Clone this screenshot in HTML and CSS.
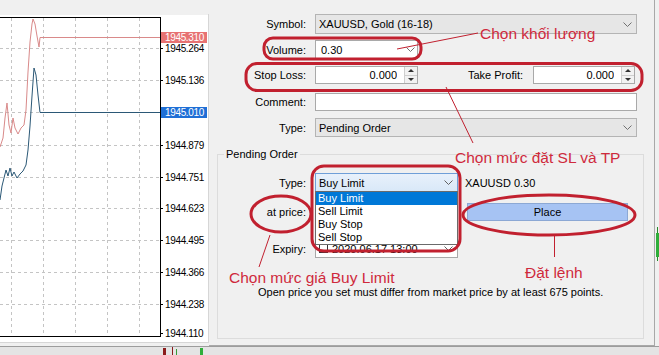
FILE: index.html
```html
<!DOCTYPE html>
<html lang="vi">
<head>
<meta charset="utf-8">
<title>Order</title>
<link rel="stylesheet" href="styles.css">
</head>
<body>
<div class="screen">
  <div class="main">
    <div class="chart-panel">
      <svg class="chart" width="209" height="346" viewBox="0 0 209 346">
        <rect x="0" y="0" width="209" height="346" fill="#f0f0f0"/>
        <rect x="0" y="15" width="208" height="327" fill="#ffffff"/>
        <line x1="208.5" y1="14" x2="208.5" y2="343" stroke="#d6d6d6"/>
        <line x1="0" y1="342.5" x2="209" y2="342.5" stroke="#d6d6d6"/>
        <g stroke="#c4c4c4" stroke-dasharray="3 3" fill="none">
          <line x1="0" y1="48.5" x2="160" y2="48.5"/>
          <line x1="0" y1="80.5" x2="160" y2="80.5"/>
          <line x1="0" y1="112.5" x2="160" y2="112.5"/>
          <line x1="0" y1="145.5" x2="160" y2="145.5"/>
          <line x1="0" y1="177.5" x2="160" y2="177.5"/>
          <line x1="0" y1="208.5" x2="160" y2="208.5"/>
          <line x1="0" y1="240.5" x2="160" y2="240.5"/>
          <line x1="0" y1="272.5" x2="160" y2="272.5"/>
          <line x1="0" y1="304.5" x2="160" y2="304.5"/>
          <line x1="11.5" y1="18" x2="11.5" y2="336"/>
          <line x1="43.5" y1="18" x2="43.5" y2="336"/>
          <line x1="75.5" y1="18" x2="75.5" y2="336"/>
          <line x1="107.5" y1="18" x2="107.5" y2="336"/>
          <line x1="139.5" y1="18" x2="139.5" y2="336"/>
        </g>
        <polyline fill="none" stroke="#d98a8a" stroke-width="1" points="0,147 3,138 5,118 7,103 9,125 11,133 13,118 15,128 18,134 21,128 24,125 26,110 28,72 30,42 32,24 33,19 35,24 37,36 39,47 40,37.5 160,37.5"/>
        <polyline fill="none" stroke="#2b5876" stroke-width="1" points="0,200 2,186 4,178 6,170 8,176 10,168 12,176 14,172 17,178 20,174 23,171 26,165 28,150 30,126 32,96 34,68 36,75 38,95 40,112.5 160,112.5"/>
        <g stroke="#000" fill="none">
          <line x1="0" y1="17.5" x2="161" y2="17.5"/>
          <line x1="160.5" y1="17" x2="160.5" y2="337"/>
          <line x1="0" y1="336.5" x2="161" y2="336.5"/>
          <line x1="160" y1="48.5" x2="163" y2="48.5"/>
          <line x1="160" y1="80.5" x2="163" y2="80.5"/>
          <line x1="160" y1="145.5" x2="163" y2="145.5"/>
          <line x1="160" y1="177.5" x2="163" y2="177.5"/>
          <line x1="160" y1="208.5" x2="163" y2="208.5"/>
          <line x1="160" y1="240.5" x2="163" y2="240.5"/>
          <line x1="160" y1="272.5" x2="163" y2="272.5"/>
          <line x1="160" y1="304.5" x2="163" y2="304.5"/>
          <line x1="160" y1="333.5" x2="163" y2="333.5"/>
        </g>
        <rect x="161" y="32" width="46" height="11" fill="#e77272"/>
        <rect x="161" y="107" width="46" height="11" fill="#1f6fd6"/>
        <g class="axis" font-family="Liberation Sans, Arial, sans-serif" font-size="10" letter-spacing="-0.35" fill="#000">
          <text x="165" y="41.2" fill="#ffffff">1945.310</text>
          <text x="165" y="52">1945.264</text>
          <text x="165" y="84">1945.136</text>
          <text x="165" y="116" fill="#ffffff">1945.010</text>
          <text x="165" y="149">1944.879</text>
          <text x="165" y="181">1944.751</text>
          <text x="165" y="212">1944.623</text>
          <text x="165" y="244">1944.495</text>
          <text x="165" y="276">1944.366</text>
          <text x="165" y="308">1944.238</text>
          <text x="165" y="337">1944.110</text>
        </g>
      </svg>
    </div>

    <div class="dialog">
      <div class="row h20">
        <span class="lbl">Symbol:</span>
        <div class="ctrl combo-ro w-full">
          <span class="val">XAUUSD, Gold (16-18)</span>
          <svg class="chev" width="9" height="5" viewBox="0 0 9 5"><polyline points="0.5,0.5 4.5,4.5 8.5,0.5" fill="none" stroke="#707070"/></svg>
        </div>
      </div>

      <div class="row h19 mt6">
        <span class="lbl">Volume:</span>
        <div class="ctrl edit w-num vol">
          <span class="val">0.30</span>
          <svg class="chev" width="9" height="5" viewBox="0 0 9 5"><polyline points="0.5,0.5 4.5,4.5 8.5,0.5" fill="none" stroke="#707070"/></svg>
        </div>
      </div>

      <div class="row h18 mt7">
        <span class="lbl">Stop Loss:</span>
        <div class="ctrl edit w-num num">
          <span class="val">0.000</span>
          <span class="spin"><span class="spin-btn up"></span><span class="spin-btn down"></span></span>
        </div>
        <span class="lbl-tp">Take Profit:</span>
        <div class="ctrl edit w-tp num">
          <span class="val">0.000</span>
          <span class="spin"><span class="spin-btn up"></span><span class="spin-btn down"></span></span>
        </div>
      </div>

      <div class="row h18 mt9">
        <span class="lbl">Comment:</span>
        <div class="ctrl edit w-full"></div>
      </div>

      <div class="row h19 mt7">
        <span class="lbl">Type:</span>
        <div class="ctrl combo-ro w-full">
          <span class="val">Pending Order</span>
          <svg class="chev" width="9" height="5" viewBox="0 0 9 5"><polyline points="0.5,0.5 4.5,4.5 8.5,0.5" fill="none" stroke="#707070"/></svg>
        </div>
      </div>

      <div class="group">
        <span class="legend">Pending Order</span>

        <div class="row h19">
          <span class="lbl lbl-g">Type:</span>
          <div class="ctrl combo-focus w-mid">
            <span class="val">Buy Limit</span>
            <svg class="chev" width="9" height="5" viewBox="0 0 9 5"><polyline points="0.5,0.5 4.5,4.5 8.5,0.5" fill="none" stroke="#606060"/></svg>
            <ul class="droplist">
              <li class="sel">Buy Limit</li>
              <li>Sell Limit</li>
              <li>Buy Stop</li>
              <li>Sell Stop</li>
            </ul>
          </div>
          <span class="sym-info">XAUUSD 0.30</span>
        </div>

        <div class="row h18 mt11">
          <span class="lbl lbl-g">at price:</span>
          <div class="ctrl edit w-mid"></div>
          <div class="btn">Place</div>
        </div>

        <div class="row h19 mt18">
          <span class="lbl lbl-g">Expiry:</span>
          <div class="ctrl edit w-mid expiry">
            <span class="check"></span>
            <span class="val">2020.06.17 13:00</span>
            <svg class="chev" width="9" height="5" viewBox="0 0 9 5"><polyline points="0.5,0.5 4.5,4.5 8.5,0.5" fill="none" stroke="#606060"/></svg>
          </div>
        </div>

        <p class="msg">Open price you set must differ from market price by at least 675 points.</p>
      </div>
    </div>

    <div class="edge">
      <svg width="4" height="346" viewBox="0 0 4 346">
        <line x1="2.5" y1="227" x2="2.5" y2="261" stroke="#2a8a2a"/>
        <rect x="1" y="233" width="3" height="24" fill="#2fae3a"/>
      </svg>
    </div>
  </div>

  <div class="statusbar">
    <svg width="659" height="8" viewBox="0 0 659 8">
      <rect x="163" y="1" width="3" height="7" fill="#8c1c1c"/>
      <line x1="172.5" y1="0" x2="172.5" y2="8" stroke="#8c1c1c"/>
      <line x1="176.5" y1="2" x2="176.5" y2="8" stroke="#3a9a3a"/>
      <rect x="200" y="1" width="3" height="7" fill="#2fae3a"/>
    </svg>
  </div>

  <svg class="annot" width="659" height="355" viewBox="0 0 659 355">
    <g fill="none" stroke="#c1202f">
      <rect x="264" y="38" width="157" height="21" rx="9" stroke-width="3"/>
      <rect x="246" y="63.5" width="396" height="27" rx="11" stroke-width="3"/>
      <rect x="312" y="166" width="148" height="85" rx="12" stroke-width="3"/>
      <ellipse cx="281" cy="214" rx="30" ry="18" stroke-width="3"/>
      <ellipse cx="549" cy="215" rx="86" ry="20" stroke-width="3"/>
      <line x1="397" y1="49" x2="478" y2="33" stroke-width="1"/>
      <line x1="446" y1="87" x2="473" y2="143" stroke-width="1"/>
      <line x1="270" y1="235" x2="259" y2="267" stroke-width="1"/>
      <line x1="554.5" y1="236" x2="554.5" y2="257" stroke-width="1"/>
    </g>
  </svg>
  <p class="note note-vol">Chọn khối lượng</p>
  <p class="note note-sltp">Chọn mức đặt SL và TP</p>
  <p class="note note-price">Chọn mức giá Buy Limit</p>
  <p class="note note-place">Đặt lệnh</p>
</div>
</body>
</html>
```

FILE: styles.css
```css
* { box-sizing: border-box; }

html, body {
  margin: 0;
  padding: 0;
}

body {
  background: #f0f0f0;
  font-family: "Liberation Sans", Arial, sans-serif;
  font-size: 11px;
  color: #000;
}

.screen {
  position: relative;
  width: 659px;
  height: 355px;
  overflow: hidden;
}

.main {
  display: flex;
  height: 346px;
}

.chart-panel { flex: 0 0 209px; }
.chart { display: block; }

.dialog {
  flex: 0 0 446px;
  padding-top: 14px;
  border-right: 1px solid #a8a8a8;
  border-bottom: 1px solid #a8a8a8;
}

.edge { flex: 1; }
.edge svg { display: block; }

.statusbar {
  height: 9px;
  background: #e4e4e4;
  border-top: 1px solid #9c9c9c;
}
.statusbar svg { display: block; }

/* rows */
.row {
  display: flex;
  align-items: center;
}
.h18 { height: 18px; }
.h19 { height: 19px; }
.h20 { height: 20px; }
.mt6 { margin-top: 6px; }
.mt7 { margin-top: 7px; }
.mt9 { margin-top: 9px; }
.mt11 { margin-top: 11px; }
.mt18 { margin-top: 18px; }

.lbl {
  flex: 0 0 97px;
  margin-right: 9px;
  text-align: right;
  white-space: nowrap;
}
.lbl-g { flex-basis: 88px; }

.lbl-tp {
  flex: 0 0 105px;
  margin-right: 10px;
  text-align: right;
  white-space: nowrap;
}

/* controls */
.ctrl {
  position: relative;
  height: 100%;
  display: flex;
  align-items: center;
  padding: 0 4px 0 3px;
  border: 1px solid #a6a6a6;
  white-space: nowrap;
}
.combo-ro { background: #e6e6e6; border-color: #b4b4b4; }
.edit { background: #fff; border-color: #a9a9a9; }
.combo-focus {
  background: linear-gradient(#e8f1fb, #d9e8f8);
  border-color: #6f9fd8;
}
.w-full { width: 322px; }
.w-num { width: 103px; }
.w-tp { width: 102px; }
.w-mid { width: 143px; }

.val { flex: 1; overflow: hidden; }
.chev { flex: 0 0 auto; display: block; }

.vol { padding-left: 5px; padding-right: 2px; }

.num { padding-right: 0; }
.num .val { text-align: right; margin-right: 7px; }

.spin {
  flex: 0 0 13px;
  height: 100%;
  display: flex;
  flex-direction: column;
  border-left: 1px solid #cfcfcf;
}
.spin-btn {
  flex: 1;
  display: flex;
  align-items: center;
  justify-content: center;
  background: #f2f2f2;
}
.spin-btn + .spin-btn { border-top: 1px solid #cfcfcf; }
.spin-btn::after {
  content: "";
  width: 0;
  height: 0;
  border-left: 3px solid transparent;
  border-right: 3px solid transparent;
}
.up::after { border-bottom: 3px solid #333; }
.down::after { border-top: 3px solid #333; }

.sym-info { margin-left: 7px; }

/* group box */
.group {
  position: relative;
  margin: 17px 0 0 8px;
  width: 427px;
  height: 185px;
  padding-top: 18px;
  border: 1px solid #dcdcdc;
}
.legend {
  position: absolute;
  top: -7px;
  left: 6px;
  padding: 0 2px;
  line-height: 13px;
  background: #f0f0f0;
}

.droplist {
  position: absolute;
  top: 100%;
  left: -1px;
  width: 143px;
  margin: 0;
  padding: 0;
  list-style: none;
  background: #fff;
  border: 1px solid #6b6b6b;
  z-index: 2;
}
.droplist li {
  height: 13px;
  line-height: 13px;
  padding-left: 2px;
}
.droplist li.sel { background: #0078d7; color: #fff; }

.btn {
  margin-left: 9px;
  width: 161px;
  height: 18px;
  display: flex;
  align-items: center;
  justify-content: center;
  background: #a6c3f3;
  border: 1px solid #8ca8d4;
}

.expiry { padding-left: 3px; }
.check {
  flex: 0 0 9px;
  height: 9px;
  margin-right: 4px;
  border: 1px solid #333;
  background: #fff;
}

.msg {
  margin: 28px 0 0 40px;
  line-height: 13px;
  white-space: nowrap;
}

/* annotations */
.annot {
  position: absolute;
  top: 0;
  left: 0;
  pointer-events: none;
  z-index: 3;
}
.note {
  position: absolute;
  margin: 0;
  font-family: "Liberation Sans", Arial, sans-serif;
  font-size: 15.5px;
  line-height: 16px;
  color: #cf2a3c;
  white-space: nowrap;
  z-index: 4;
}
.note-vol { top: 26px; left: 480px; }
.note-sltp { top: 150px; left: 455px; }
.note-price { top: 270px; left: 229px; }
.note-place { top: 265px; left: 525px; }
```
